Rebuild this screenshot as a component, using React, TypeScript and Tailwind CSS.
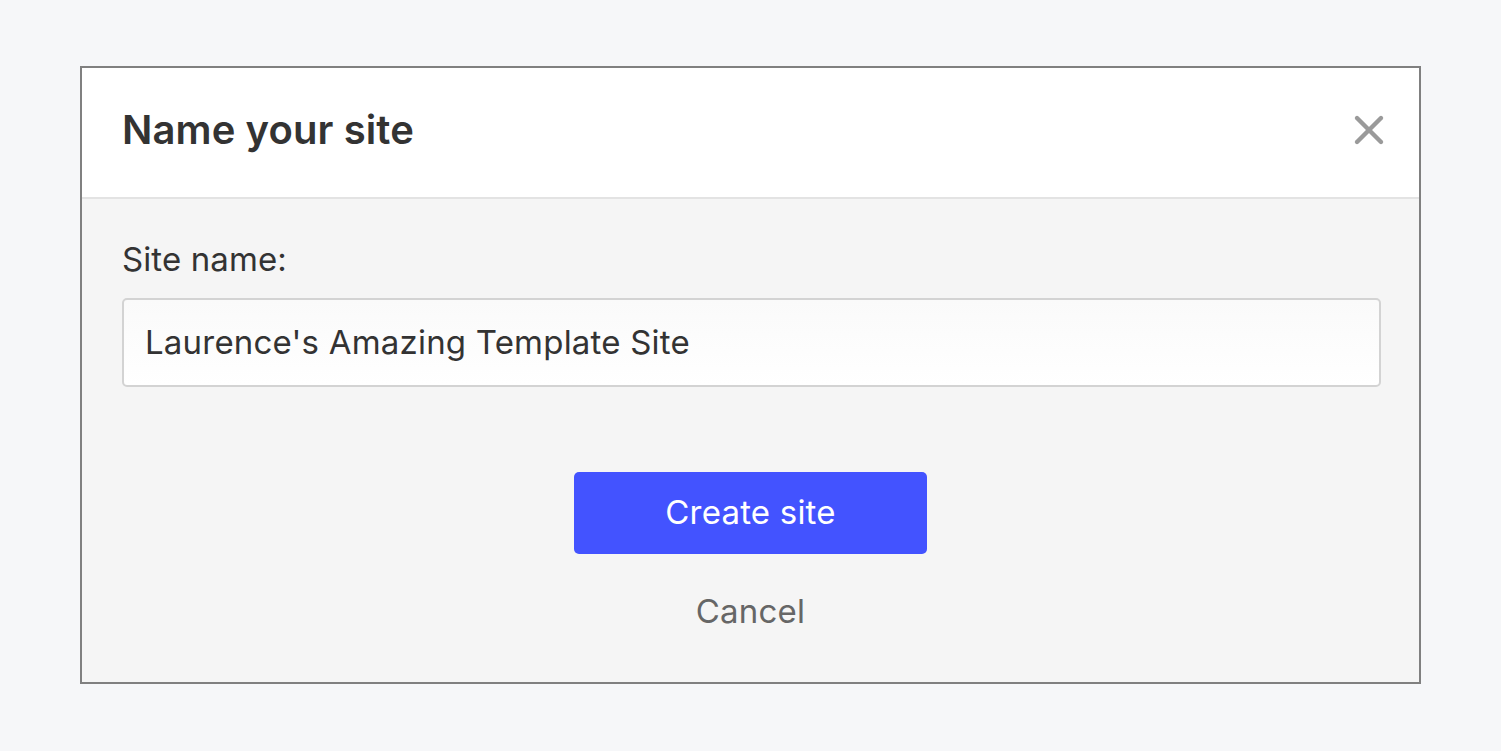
import { X } from "lucide-react";

export default function App() {
  return (
    <div
      className="w-[1501px] h-[751px] bg-[#f6f7f9] pt-[66px] px-[80px]"
      style={{ fontFamily: "Inter, 'Noto Sans', sans-serif" }}
    >
      <div className="w-[1341px] h-[618px] border-2 border-[#808080] bg-[#f5f5f5] flex flex-col">
        {/* header */}
        <div className="h-[131px] bg-white border-b-2 border-[#e3e3e3] flex items-center justify-between pl-[40px] pr-[26px]">
          <h1 className="text-[40px] leading-[48px] font-semibold text-[#333] mb-[6px] tracking-[0.1px]">
            Name your site
          </h1>
          <button className="text-[#9a9a9a] mb-[6px]">
            <X size={48} strokeWidth={2.2} />
          </button>
        </div>

        {/* body */}
        <div className="flex flex-col pl-[40px] pr-[38px] pt-[40px]">
          <label className="text-[33px] text-[#333] leading-[40px] tracking-[0.1px]">Site name:</label>
          <div className="mt-[19px] h-[89px] rounded-[5px] border-2 border-[#d3d3d3] bg-gradient-to-b from-[#fafafa] to-white flex items-center pl-[21px]">
            <span className="text-[33px] text-[#333] tracking-[0.2px]">Laurence's Amazing Template Site</span>
          </div>

          <div className="flex flex-col items-center mt-[85px] pr-[2px]">
            <button className="w-[353px] h-[82px] rounded-[5px] bg-[#4353ff] text-white text-[33px] tracking-[0.2px]">
              Create site
            </button>
            <button className="mt-[37px] text-[33px] text-[#666] leading-[40px] tracking-[0.2px]">Cancel</button>
          </div>
        </div>
      </div>
    </div>
  );
}
